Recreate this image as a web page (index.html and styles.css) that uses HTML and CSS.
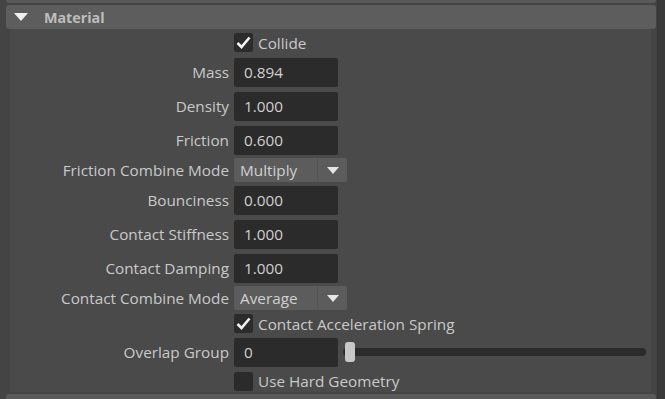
FILE: index.html
```html
<!DOCTYPE html>
<html>
<head>
<meta charset="utf-8">
<link rel="stylesheet" href="styles.css">
</head>
<body>
<div class="frame">
  <div class="main">
    <div class="prev-strip"></div>
    <div class="header">
      <svg class="caret" width="14" height="8" viewBox="0 0 14 8"><path d="M0 0H14L7 8Z" fill="#f0f0f0"/></svg>
      <span class="title">Material</span>
    </div>
    <div class="panel">
      <div class="row r-check">
        <div class="label"></div>
        <div class="ctl"><span class="cb on"><svg width="15" height="13" viewBox="0 0 15 13"><path d="M1.5 7L5.5 11L13.5 1.5" stroke="#f2f2f2" stroke-width="2.6" fill="none"/></svg></span><span class="cbtext">Collide</span></div>
      </div>
      <div class="row r-input">
        <div class="label">Mass</div>
        <div class="ctl"><span class="field">0.894</span></div>
      </div>
      <div class="row r-input">
        <div class="label">Density</div>
        <div class="ctl"><span class="field">1.000</span></div>
      </div>
      <div class="row r-input">
        <div class="label">Friction</div>
        <div class="ctl"><span class="field">0.600</span></div>
      </div>
      <div class="row r-drop">
        <div class="label">Friction Combine Mode</div>
        <div class="ctl"><span class="drop"><span class="dval">Multiply</span><span class="darrow"><svg width="12" height="7" viewBox="0 0 12 7"><path d="M0 0H12L6 7Z" fill="#e6e6e6"/></svg></span></span></div>
      </div>
      <div class="row r-input">
        <div class="label">Bounciness</div>
        <div class="ctl"><span class="field">0.000</span></div>
      </div>
      <div class="row r-input">
        <div class="label">Contact Stiffness</div>
        <div class="ctl"><span class="field">1.000</span></div>
      </div>
      <div class="row r-input">
        <div class="label">Contact Damping</div>
        <div class="ctl"><span class="field">1.000</span></div>
      </div>
      <div class="row r-drop">
        <div class="label">Contact Combine Mode</div>
        <div class="ctl"><span class="drop"><span class="dval">Average</span><span class="darrow"><svg width="12" height="7" viewBox="0 0 12 7"><path d="M0 0H12L6 7Z" fill="#e6e6e6"/></svg></span></span></div>
      </div>
      <div class="row r-check">
        <div class="label"></div>
        <div class="ctl"><span class="cb on"><svg width="15" height="13" viewBox="0 0 15 13"><path d="M1.5 7L5.5 11L13.5 1.5" stroke="#f2f2f2" stroke-width="2.6" fill="none"/></svg></span><span class="cbtext">Contact Acceleration Spring</span></div>
      </div>
      <div class="row r-slider">
        <div class="label">Overlap Group</div>
        <div class="ctl"><span class="field">0</span><span class="track"><span class="thumb"></span></span></div>
      </div>
      <div class="row r-check2">
        <div class="label"></div>
        <div class="ctl"><span class="cb"></span><span class="cbtext">Use Hard Geometry</span></div>
      </div>
    </div>
    <div class="next-strip"></div>
  </div>
  <div class="scroll"></div>
</div>
</body>
</html>
```
FILE: styles.css
```css
html, body {
  margin: 0;
  padding: 0;
  background: #444444;
  font-family: "Open Sans", "Noto Sans", sans-serif;
  font-size: 15.3px;
  color: #c9c9c9;
  overflow: hidden;
}
.frame {
  display: flex;
  width: 665px;
  height: 399px;
}
.main {
  width: 652px;
  margin-left: 6px;
  display: flex;
  flex-direction: column;
}
.prev-strip {
  height: 3px;
  background: #5a5a5a;
  border-radius: 0 0 3px 3px;
  flex: none;
}
.header {
  margin-top: 2px;
  height: 24px;
  background: #5d5d5d;
  border-radius: 3px;
  display: flex;
  align-items: center;
  flex: none;
}
.caret {
  margin-left: 8px;
}
.title {
  margin-left: 16px;
  font-weight: bold;
  font-size: 14.3px;
  color: #bdbdbd;
}
.panel {
  margin-left: 4px;
  margin-right: 5px;
  padding-top: 1px;
  background: #4a4a4a;
  height: 362px;
  flex: none;
  display: flex;
  flex-direction: column;
}
.next-strip {
  margin-top: 2px;
  height: 8px;
  background: #5a5a5a;
  border-radius: 3px 3px 0 0;
  flex: none;
}
.scroll {
  width: 7px;
  margin-left: 1px;
  background: #3a3a3a;
  border-left: 1px solid #333;
}
.row {
  display: flex;
  align-items: center;
  flex: none;
}
.r-check { height: 25px; }
.r-input { height: 34px; }
.r-drop { height: 26px; }
.r-slider { height: 30px; }
.r-check2 { height: 28px; }
.r-check + .r-slider { margin-top: 1px; }
.label {
  width: 219px;
  text-align: right;
  white-space: nowrap;
  flex: none;
}
.ctl {
  margin-left: 5px;
  display: flex;
  align-items: center;
  white-space: nowrap;
}
.cb {
  width: 19px;
  height: 19px;
  background: #2b2b2b;
  border-radius: 2px;
  display: flex;
  align-items: center;
  justify-content: center;
}
.cbtext {
  margin-left: 5px;
}
.field {
  width: 94px;
  height: 29px;
  padding-left: 10px;
  background: #2b2b2b;
  border-radius: 2px;
  display: flex;
  align-items: center;
  color: #d0d0d0;
}
.drop {
  width: 113px;
  height: 24px;
  background: #5c5c5c;
  border-radius: 2px;
  display: flex;
  align-items: center;
}
.dval {
  width: 77px;
  padding-left: 6px;
  height: 24px;
  line-height: 24px;
  border-right: 1px solid #545454;
  color: #d0d0d0;
}
.darrow {
  flex: 1;
  display: flex;
  justify-content: center;
  align-items: center;
}
.track {
  position: relative;
  margin-left: 5px;
  width: 303px;
  height: 8px;
  background: #2b2b2b;
  border-radius: 4px;
}
.thumb {
  position: absolute;
  left: 2px;
  top: -6px;
  width: 10px;
  height: 20px;
  background: #c8c8c8;
  border-radius: 3px;
}
```
